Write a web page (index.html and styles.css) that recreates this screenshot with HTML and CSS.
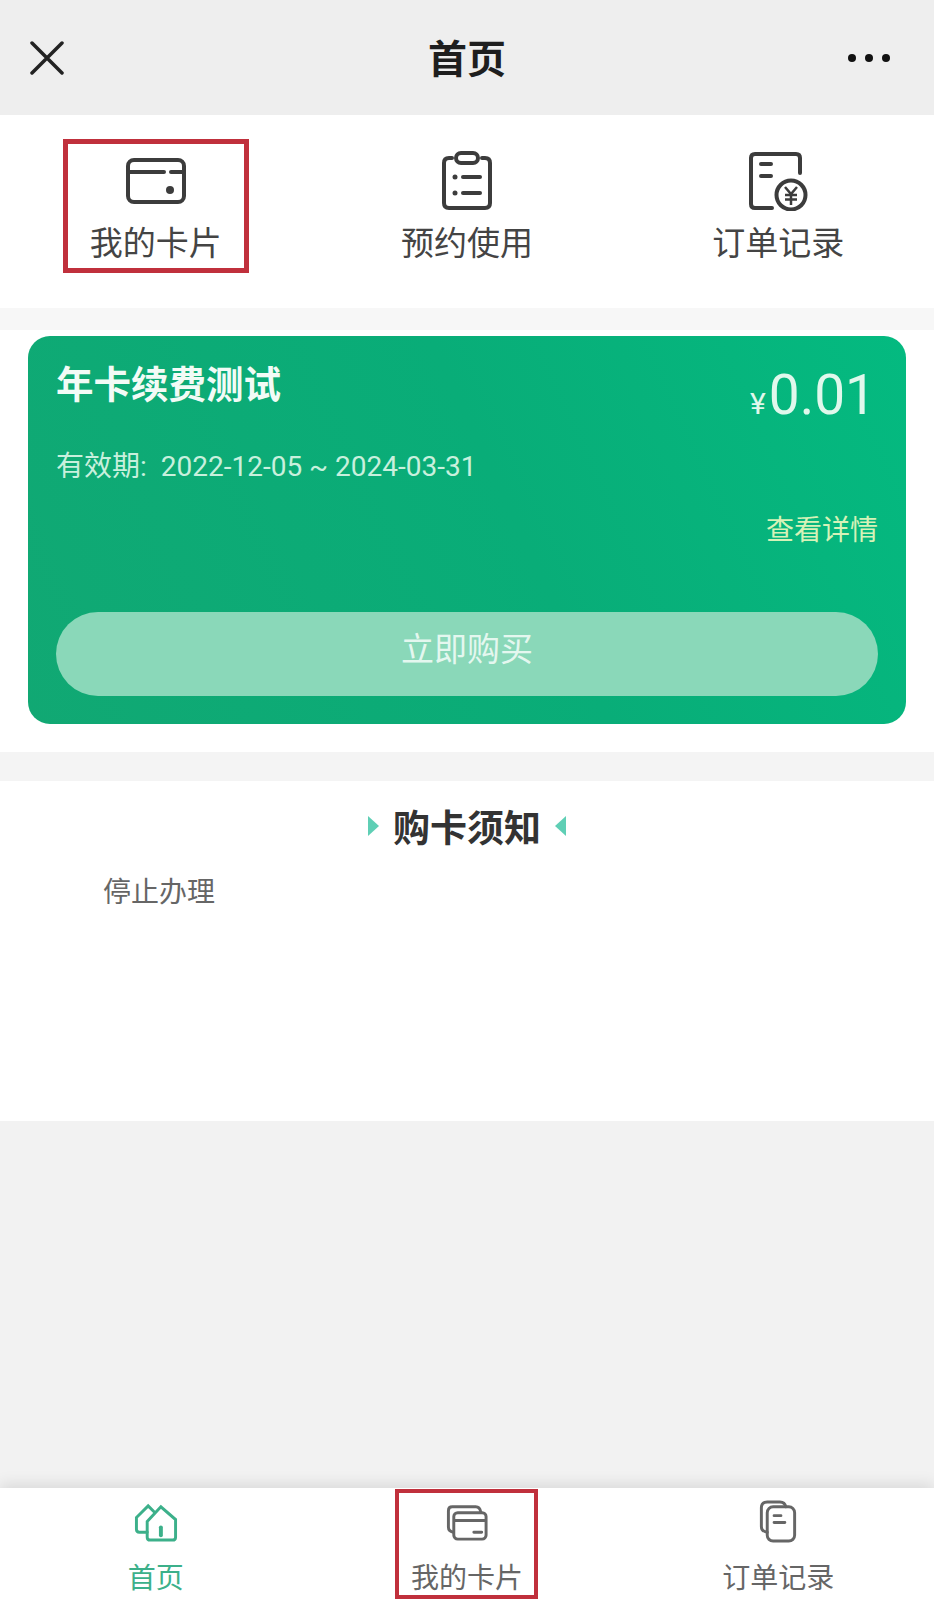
FILE: index.html
```html
<!DOCTYPE html>
<html lang="zh-CN">
<head>
    <meta charset="UTF-8">
    <meta name="viewport" content="width=device-width, initial-scale=1.0">
    <title>首页</title>
    <link rel="stylesheet" href="styles.css">
</head>
<body>
    <div class="app-container">

        <!-- Title bar -->
        <div class="header">
            <svg class="close-icon" width="34" height="34" viewBox="0 0 34 34">
                <path d="M2 2L32 32M32 2L2 32"/>
            </svg>
            <h1>首页</h1>
            <div class="more"><span></span><span></span><span></span></div>
        </div>

        <!-- Top nav -->
        <div class="nav">
            <div class="nav-box marked">
                <svg class="nav-icon" width="60" height="60" viewBox="0 0 60 60">
                    <rect x="2" y="9" width="56" height="42" rx="6"/>
                    <path d="M2 21H38M45 21H58"/>
                    <circle class="dot" cx="44" cy="39" r="4"/>
                </svg>
                <span>我的卡片</span>
            </div>
            <div class="nav-box">
                <svg class="nav-icon" width="60" height="60" viewBox="0 0 60 60">
                    <path d="M15 7H12Q7 7 7 12V52Q7 57 12 57H48Q53 57 53 52V12Q53 7 48 7H45"/>
                    <rect x="19" y="2" width="22" height="10" rx="5"/>
                    <circle class="dot" cx="18" cy="26" r="2.5"/>
                    <path d="M26 26H43"/>
                    <circle class="dot" cx="18" cy="42" r="2.5"/>
                    <path d="M26 42H43"/>
                </svg>
                <span>预约使用</span>
            </div>
            <div class="nav-box">
                <svg class="nav-icon" width="60" height="60" viewBox="0 0 60 60">
                    <path d="M52 22V7Q52 3 48 3H7Q3 3 3 7V53Q3 57 7 57H24"/>
                    <path d="M13 13H23M13 25H23"/>
                    <circle cx="43" cy="44" r="14.5"/>
                    <path class="thin" d="M37 36L43 43L49 36M43 43V54M37 44H49M37 48.5H49"/>
                </svg>
                <span>订单记录</span>
            </div>
        </div>

        <div class="gap gap-top"></div>

        <!-- Card -->
        <div class="section card-section">
            <div class="card">
                <div class="card-top">
                    <div class="card-title">年卡续费测试</div>
                    <div class="price"><small>¥</small>0.01</div>
                </div>
                <div class="valid"><span class="valid-label">有效期:</span>2022-12-05 ~ 2024-03-31</div>
                <div class="detail">查看详情</div>
                <button class="buy">立即购买</button>
            </div>
        </div>

        <div class="gap"></div>

        <!-- Notice -->
        <div class="section notice">
            <div class="notice-title">
                <i class="tri tri-right"></i>
                <h2>购卡须知</h2>
                <i class="tri tri-left"></i>
            </div>
            <p>停止办理</p>
        </div>

        <div class="filler"></div>

        <!-- Bottom tabs -->
        <div class="tabs">
            <div class="tab-box active">
                <svg class="tab-icon" width="44" height="46" viewBox="0 0 44 46">
                    <path d="M13 23L27 8L42 21V39Q42 42 39 42H16Q13 42 13 39Z"/>
                    <path d="M13 34H5Q2 34 2 31V19L14 7L20 13"/>
                    <path class="door" d="M27 29V37"/>
                </svg>
                <span>首页</span>
            </div>
            <div class="tab-box marked">
                <svg class="tab-icon" width="44" height="46" viewBox="0 0 44 46">
                    <path d="M8 34Q3 33 3 29V12Q3 8 7 8H31Q35 8 36 13"/>
                    <rect x="8.500" y="14" width="33" height="27" rx="4"/>
                    <path d="M10 22H40M29 34H37"/>
                </svg>
                <span>我的卡片</span>
            </div>
            <div class="tab-box">
                <svg class="tab-icon" width="44" height="46" viewBox="0 0 44 46">
                    <rect x="11" y="8" width="28" height="35" rx="6"/>
                    <path d="M11 34Q5 33 5 28V9Q5 3 11 3H24Q29 3 30 8"/>
                    <path d="M18 17H25M18 24H29"/>
                </svg>
                <span>订单记录</span>
            </div>
        </div>
    </div>
</body>
</html>
```

FILE: styles.css
```css
* {
    box-sizing: border-box;
}

body {
    font-family: "Noto Sans CJK SC", "Noto Sans", sans-serif;
    background-color: #f2f2f2;
    color: #444444;
    margin: 0;
    padding: 0;
}

.app-container {
    width: 934px;
    height: 1600px;
    display: flex;
    flex-direction: column;
    overflow: hidden;
}

/* Title bar */
.header {
    height: 115px;
    flex: none;
    background-color: #eeeeee;
    display: grid;
    grid-template-columns: 1fr auto 1fr;
    align-items: center;
    padding: 0 44px 0 30px;
}

.header h1 {
    margin: 0 0 4px 14px;
    font-size: 39px;
    line-height: 50px;
    font-weight: 700;
    color: #1e1e1e;
}

.close-icon {
    fill: none;
    stroke: #222222;
    stroke-width: 3.5;
    stroke-linecap: round;
}

.more {
    display: flex;
    justify-content: flex-end;
    gap: 9px;
}

.more span {
    width: 8px;
    height: 8px;
    border-radius: 50%;
    background-color: #111111;
}

/* Top nav */
.nav {
    height: 193px;
    flex: none;
    background-color: #ffffff;
    display: grid;
    grid-template-columns: repeat(3, 1fr);
    justify-items: center;
    padding: 24px 0 0;
}

.nav-box {
    width: 186px;
    height: 134px;
    border: 5px solid transparent;
    display: flex;
    flex-direction: column;
    align-items: center;
    padding-top: 7px;
    font-size: 33px;
    line-height: 44px;
    color: #444444;
}

.nav-box span {
    margin-top: 8px;
}

.nav-icon, .tab-icon {
    fill: none;
    stroke: #3c3c3c;
    stroke-width: 4;
    stroke-linecap: round;
}

.nav-icon .dot {
    fill: #3c3c3c;
    stroke: none;
}

.nav-icon .thin {
    stroke-width: 2.5;
    stroke-linecap: butt;
}

.gap {
    height: 29px;
    flex: none;
    background-color: #f4f4f4;
}

.gap-top {
    height: 22px;
    background-color: #f7f7f7;
}

.section {
    background-color: #ffffff;
    flex: none;
}

/* Card */
.card-section {
    padding: 6px 28px 28px;
}

.card {
    height: 388px;
    border-radius: 22px;
    padding: 26px 28px 28px;
    background: linear-gradient(65deg, #11a873 0%, #09ad78 55%, #04ba80 100%);
    color: #ffffff;
}

.card-top {
    display: flex;
    justify-content: space-between;
    align-items: flex-start;
}

.card-title {
    font-size: 37.500px;
    line-height: 40px;
    font-weight: 700;
    color: #f2fbf6;
}

.price {
    font-family: Roboto, sans-serif;
    font-size: 55px;
    line-height: 60px;
    margin: 3px 2px 0 0;
    color: #e0f8ec;
}

.price small {
    font-size: 30px;
    margin-right: 3px;
}

.valid {
    margin-top: 13px;
    font-size: 28px;
    line-height: 40px;
    font-family: Roboto, "Noto Sans CJK SC", sans-serif;
    color: #c8f0dd;
}

.valid-label {
    margin-right: 14px;
}

.detail {
    margin-top: 21px;
    font-size: 28px;
    line-height: 40px;
    text-align: right;
    color: #d6f2b8;
}

.buy {
    display: block;
    width: 100%;
    height: 84px;
    margin-top: 64px;
    border: none;
    border-radius: 42px;
    padding: 0 0 14px;
    background-color: #8ad8b9;
    color: #e4f7ef;
    font-family: inherit;
    font-size: 33px;
}

/* Notice */
.notice {
    height: 340px;
    padding-top: 25px;
}

.notice-title {
    display: flex;
    justify-content: center;
    align-items: center;
    gap: 14px;
}

.notice-title h2 {
    margin: 0;
    font-size: 37px;
    line-height: 40px;
    font-weight: 700;
    color: #333333;
}

.tri {
    width: 0;
    height: 0;
    border-top: 10px solid transparent;
    border-bottom: 10px solid transparent;
}

.tri-right {
    border-left: 11px solid #5fcfb5;
}

.tri-left {
    border-right: 11px solid #5fcfb5;
}

.notice p {
    margin: 24px 0 0 103px;
    font-size: 28px;
    line-height: 40px;
    color: #666666;
}

.filler {
    flex: 1;
}

/* Bottom tabs */
.tabs {
    height: 112px;
    flex: none;
    background-color: #ffffff;
    box-shadow: 0 -4px 14px rgba(0, 0, 0, 0.1);
    display: grid;
    grid-template-columns: repeat(3, 1fr);
    justify-items: center;
    padding-top: 1px;
}

.tab-box {
    width: 143px;
    height: 110px;
    border: 4px solid transparent;
    display: flex;
    flex-direction: column;
    align-items: center;
    padding-top: 6px;
    font-size: 28px;
    line-height: 38px;
    color: #666666;
}

.tab-box span {
    margin-top: 13px;
}

.tab-icon {
    stroke: #666666;
    stroke-width: 3;
}

.tab-icon .door {
    stroke-width: 4;
}

.marked {
    border-color: #c0303c;
}

.active {
    color: #3cb08a;
}

.active .tab-icon {
    stroke: #3cb08a;
}
```
